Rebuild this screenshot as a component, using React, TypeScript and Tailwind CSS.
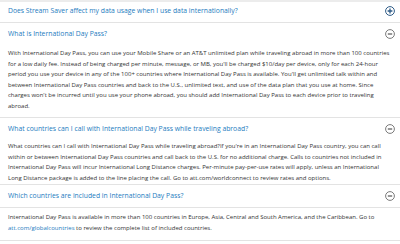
import React from "react";

const PlusIcon = () => (
  <svg width="10" height="10" viewBox="0 0 10 10">
    <circle cx="5" cy="5" r="4.4" fill="none" stroke="#2d5a86" strokeWidth="1" />
    <path d="M5 2.6v4.8M2.6 5h4.8" stroke="#2d5a86" strokeWidth="1.3" />
  </svg>
);

const MinusIcon = () => (
  <svg width="10" height="10" viewBox="0 0 10 10">
    <circle cx="5" cy="5" r="4.4" fill="none" stroke="#6b6b6b" strokeWidth="0.9" />
    <path d="M2.8 5h4.4" stroke="#555" strokeWidth="1.2" />
  </svg>
);

const Header = ({ q, open }: { q: string; open: boolean }) => (
  <div className="flex items-center justify-between h-[22px] pl-[8px] pr-[5px]">
    <span className="text-[6.8px] text-[#1d7cc0]">{q}</span>
    {open ? <MinusIcon /> : <PlusIcon />}
  </div>
);

export default function App() {
  return (
    <div
      className="w-[400px] h-[244px] bg-white overflow-hidden"
      style={{ fontFamily: '"Open Sans", "Liberation Sans", sans-serif' }}
    >
      <div className="border-t-[2px] border-[#ececec]" />
      <div className="border-b border-[#e3e3e3] -mt-[2px]">
        <Header q="Does Stream Saver affect my data usage when I use data internationally?" open={false} />
      </div>
      <div className="border-b border-[#e3e3e3]">
        <Header q="What is International Day Pass?" open />
        <p className="px-[8px] pt-[3px] pb-[6px] text-[6px] leading-[10.5px] text-[#333]">
          With International Day Pass, you can use your Mobile Share or an AT&amp;T unlimited plan while traveling abroad in more than 100 countries for a low daily fee. Instead of being charged per minute, message, or MB, you'll be charged $10/day per device, only for each 24-hour period you use your device in any of the 100+ countries where International Day Pass is available. You'll get unlimited talk within and between International Day Pass countries and back to the U.S., unlimited text, and use of the data plan that you use at home. Since charges won't be incurred until you use your phone abroad, you should add International Day Pass to each device prior to traveling
          <br />
          abroad.
        </p>
      </div>
      <div className="border-b border-[#e3e3e3]">
        <Header q="What countries can I call with International Day Pass while traveling abroad?" open />
        <p className="px-[8px] pt-[1px] pb-[1px] text-[6px] leading-[10.5px] text-[#333]">
          What countries can I call with International Day Pass while traveling abroad?If you're in an International Day Pass country, you can call within or between International Day Pass countries and call back to the U.S. for no additional charge. Calls to countries not included in International Day Pass will incur International Long Distance charges. Per-minute pay-per-use rates will apply, unless an International Long Distance package is added to the line placing the call. Go to att.com/worldconnect to review rates and options.
        </p>
      </div>
      <div className="border-b border-[#e3e3e3]">
        <div className="border-b border-[#e3e3e3]">
          <Header q="Which countries are included in International Day Pass?" open />
        </div>
        <p className="px-[8px] pt-[4px] pb-[7px] text-[6px] leading-[10.5px] text-[#333]">
          International Day Pass is available in more than 100 countries in Europe, Asia, Central and South America, and the Caribbean. Go to{" "}
          <span className="text-[#1d7cc0]">att.com/globalcountries</span> to review the complete list of included countries.
        </p>
      </div>
    </div>
  );
}
